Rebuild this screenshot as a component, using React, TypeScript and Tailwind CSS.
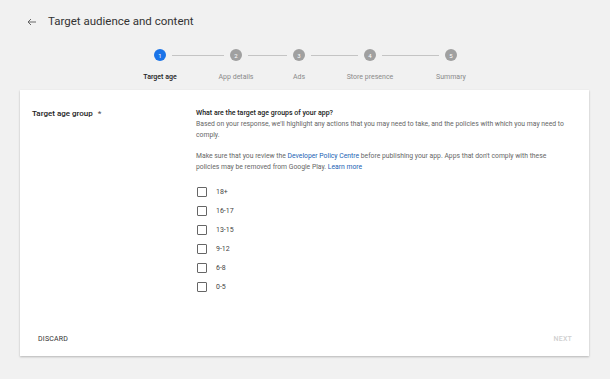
import React from "react";

const STEPS = [
  { label: "Target age", gap: 0 },
  { label: "App details", gap: 52 },
  { label: "Ads", gap: 39 },
  { label: "Store presence", gap: 47 },
  { label: "Summary", gap: 57 },
];
const AGES = ["18+", "16-17", "13-15", "9-12", "6-8", "0-5"];

export default function App() {
  return (
    <div
      className="w-[610px] h-[379px] bg-[#f1f1f1] overflow-hidden text-[#333]"
      style={{ fontFamily: "Roboto, 'Liberation Sans', sans-serif" }}
    >
      {/* Header */}
      <div className="flex items-center h-[44px] pl-[26px] gap-[10px]">
        <svg className="w-[12px] h-[12px]" viewBox="0 0 24 24" fill="none" stroke="#666" strokeWidth={2}>
          <path d="M20 12H4M10 6l-6 6 6 6" />
        </svg>
        <span className="text-[11.5px] text-[#333]">Target audience and content</span>
      </div>

      {/* Stepper */}
      <div className="flex items-start h-[46px] pl-[154px] pt-[5px]">
        {STEPS.map((s, i) => (
          <React.Fragment key={s.label}>
            {i > 0 && (
              <div className="h-px bg-[#c4c4c4] mt-[6px] mx-[6px]" style={{ width: s.gap }} />
            )}
            <div className="flex flex-col items-center w-[12px]">
              <div
                className={`w-[12px] h-[12px] shrink-0 rounded-full flex items-center justify-center text-[6px] text-white ${
                  i === 0 ? "bg-[#1a73e8]" : "bg-[#a0a0a0]"
                }`}
              >
                {i + 1}
              </div>
              <span
                className={`mt-[11px] text-[7px] whitespace-nowrap ${
                  i === 0 ? "text-[#222] font-medium" : "text-[#8a8a8a]"
                }`}
              >
                {s.label}
              </span>
            </div>
          </React.Fragment>
        ))}
      </div>

      {/* Card */}
      <div className="ml-[20px] w-[569px] h-[266px] bg-white shadow-[0_1px_2px_rgba(0,0,0,0.25)] flex flex-col">
        <div className="flex flex-1 pt-[18px]">
          <div className="w-[176px] pl-[12px] text-[8px] font-medium text-[#222]">
            Target age group <span className="ml-[3px] text-[#555]">*</span>
          </div>
          <div className="flex-1 pr-[8px]">
            <div className="text-[7px] font-medium text-[#222] leading-[10px]">
              What are the target age groups of your app?
            </div>
            <p className="text-[6.8px] text-[#666] leading-[11px] mt-px">
              Based on your response, we'll highlight any actions that you may need to take, and the policies with which you may need to comply.
            </p>
            <p className="mt-[10px] text-[6.8px] text-[#666] leading-[11px] pr-[20px]">
              <span>Make sure that you review the </span>
              <span className="text-[#1a5fb4]">Developer Policy Centre</span>
              <span> before publishing your app. Apps that don't comply with these</span>{" "}
              <span>policies may be removed from Google Play. </span>
              <span className="text-[#1a5fb4]">Learn more</span>
            </p>
            <div className="mt-[13px] flex flex-col gap-[7px]">
              {AGES.map((a) => (
                <label key={a} className="flex items-center gap-[9px] h-[12px]">
                  <span className="w-[10px] h-[10px] border border-[#666] rounded-[1px] ml-px" />
                  <span className="text-[7px] text-[#444]">{a}</span>
                </label>
              ))}
            </div>
          </div>
        </div>
        <div className="flex items-center justify-between h-[36px] pl-[18px] pr-[17px] pt-[2px]">
          <span className="text-[7px] text-[#333] tracking-[0.2px]">DISCARD</span>
          <span className="text-[7px] font-medium text-[#d0d0d0] tracking-[0.2px]">NEXT</span>
        </div>
      </div>
    </div>
  );
}
